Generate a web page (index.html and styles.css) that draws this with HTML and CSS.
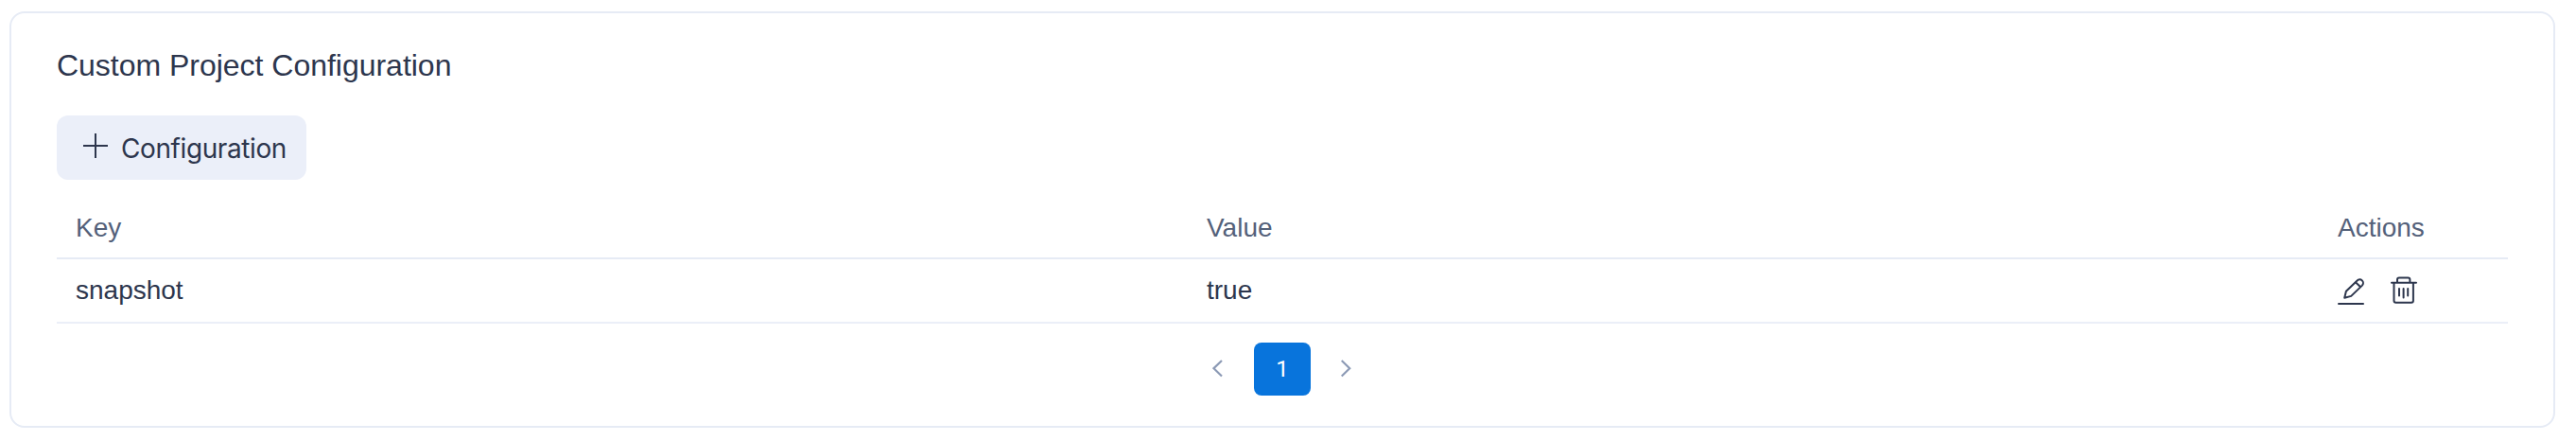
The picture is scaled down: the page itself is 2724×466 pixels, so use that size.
FILE: index.html
```html
<!DOCTYPE html>
<html lang="en">
<head>
<meta charset="utf-8">
<title>Custom Project Configuration</title>
<link rel="stylesheet" href="styles.css">
</head>
<body>
<section class="card">
  <h2 class="title"><span class="title-text">Custom Project Configuration</span></h2>
  <button class="add" type="button">
    <svg class="plus" viewBox="0 0 26 26"><path d="M13 0v26M0 13h26"/></svg>
    <span class="add-label">Configuration</span>
  </button>
  <div class="table">
    <div class="row head">
      <span>Key</span><span>Value</span><span>Actions</span>
    </div>
    <div class="row item">
      <span>snapshot</span><span>true</span>
      <span class="actions">
        <svg class="icon" viewBox="0 0 28 30"><path d="M1 29h26"/><path d="M7.200 22.800 8.900 15.800 20.600 4.500a3.600 3.600 0 0 1 5.300 5.100L14.200 20.900zM18.900 6.200l5.300 5.100"/></svg>
        <svg class="icon" viewBox="0 0 28 30"><path d="M1 6.700h26M7 6.700V3.400a2 2 0 0 1 2-2h9.400a2 2 0 0 1 2 2v3.300M3.500 6.700v19a2 2 0 0 0 2 2h16.400a2 2 0 0 0 2-2v-19M9 13v7.500M13.600 13v9.500M18.200 13v7.500"/></svg>
      </span>
    </div>
  </div>
  <nav class="pager">
    <svg class="chevron" viewBox="0 0 12 20"><path d="M10 1 1.500 9.200 10 17.500"/></svg>
    <span class="page">1</span>
    <svg class="chevron" viewBox="0 0 12 20"><path d="M.7 1 9.200 9.200.7 17.500"/></svg>
  </nav>
</section>
</body>
</html>
```
FILE: styles.css
```css
* { box-sizing: border-box; }
body {
  margin: 0;
  padding: 12px 22px 14px 10px;
  height: 466px;
  background: #fff;
  color: #2d364d;
  font-family: "Liberation Sans", Arial, sans-serif;
  font-size: 28px;
}
.card {
  height: 440px;
  padding: 35px 48px 0;
  border: 2px solid #e6ebf5;
  border-radius: 16px;
}
.title {
  margin: 0 0 33px;
  font-size: 32px;
  font-weight: 400;
  line-height: 40px;
  letter-spacing: -0.02px;
}
.add {
  display: flex;
  align-items: center;
  width: 264px;
  height: 68px;
  padding: 0 0 0 28px;
  border: 0;
  border-radius: 12px;
  background: #ebeff9;
  color: inherit;
  font: inherit;
}
.plus {
  width: 26px;
  height: 26px;
  margin: 0 14px 4px 0;
  fill: none;
  stroke: currentColor;
  stroke-width: 2;
}
.add-label {
  padding-top: 2px;
  font-family: Inter, sans-serif;
  font-variant-ligatures: none;
  letter-spacing: -0.4px;
}
.table { margin-top: 16px; }
.row {
  display: grid;
  grid-template-columns: 1196px 1196px 1fr;
  align-items: center;
  height: 68px;
  padding: 0 20px;
  border-bottom: 2px solid #ebeff8;
}
.head {
  color: #54617a;
  border-color: #e6ebf5;
  padding-top: 3px;
}
.actions {
  display: flex;
  gap: 28px;
}
.icon {
  width: 28px;
  height: 30px;
  fill: none;
  stroke: currentColor;
  stroke-width: 2;
  stroke-linecap: round;
  stroke-linejoin: round;
}
.pager {
  display: flex;
  justify-content: center;
  align-items: center;
  gap: 32px;
  margin-top: 20px;
}
.page {
  width: 60px;
  height: 56px;
  border-radius: 8px;
  background: #0874dc;
  color: #fff;
  font-family: Roboto, sans-serif;
  font-size: 24px;
  line-height: 56px;
  text-align: center;
}
.chevron {
  width: 12px;
  height: 20px;
  fill: none;
  stroke: #8c9ab5;
  stroke-width: 2.200;
}
```
